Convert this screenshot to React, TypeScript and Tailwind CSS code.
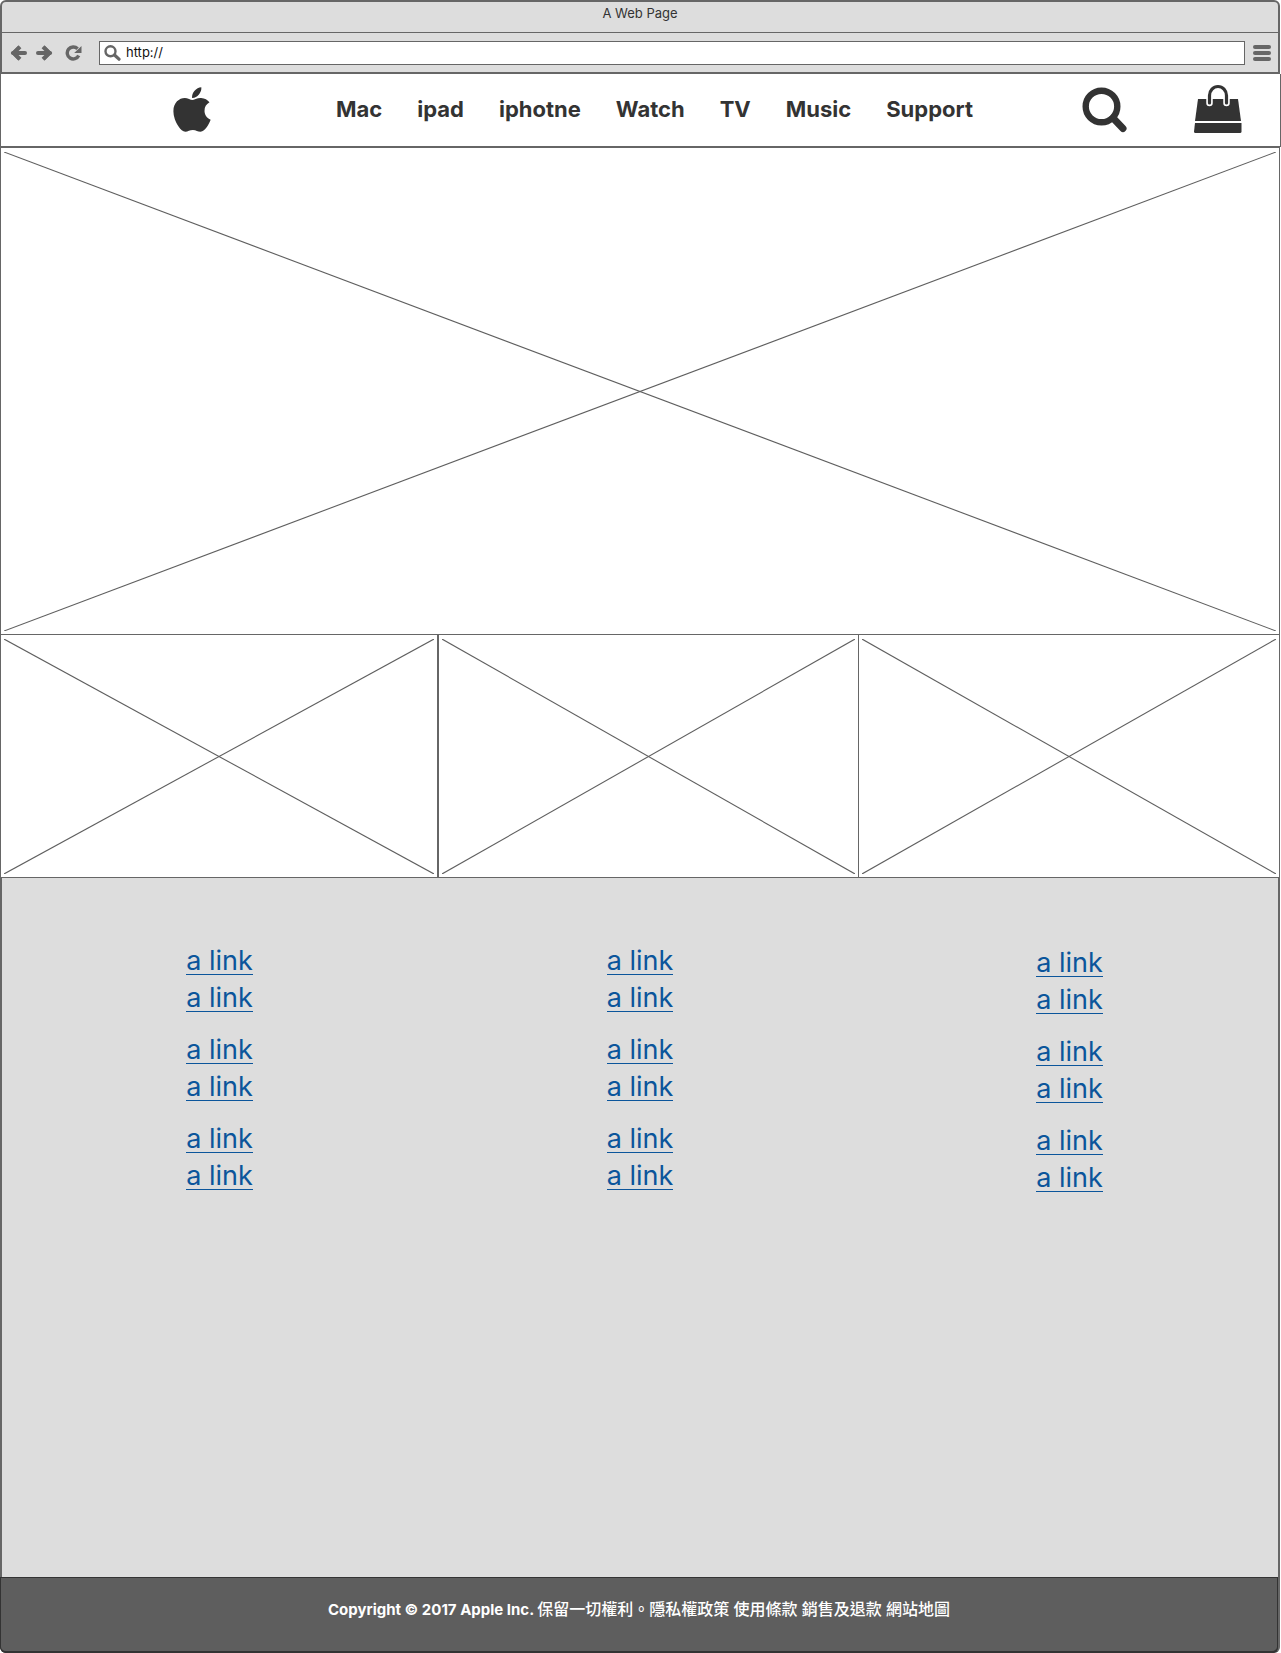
import { FaApple } from "react-icons/fa";

const navItems = ["Mac", "ipad", "iphotne", "Watch", "TV", "Music", "Support"];
const linkGroups = [0, 1, 2];

function Placeholder({ className, label }: { className: string; label: string }) {
  return (
    <div role="img" aria-label={label} className={`border-[#666] bg-white px-[3px] pt-1 pb-[3px] ${className}`}>
      <svg className="block h-full w-full" stroke="#5f5f5f" strokeWidth="1.1">
        <line x1="0" y1="0" x2="100%" y2="100%" />
        <line x1="0" y1="100%" x2="100%" y2="0" />
      </svg>
    </div>
  );
}

function LinkColumn({ className }: { className: string }) {
  return (
    <div className={`flex flex-col items-center gap-[25px] ${className}`}>
      {linkGroups.map((group) => (
        <div key={group} className="flex flex-col gap-2.5">
          <a href="#" className="border-b border-[#0b559b]">a link</a>
          <a href="#" className="border-b border-[#0b559b]">a link</a>
        </div>
      ))}
    </div>
  );
}

function BrowserBar() {
  return (
    <header className="mr-px rounded-t-md border-2 border-[#666] bg-[#ddd]">
      <h1 className="h-[31px] border-b border-[#666] text-center text-[13px] leading-[23px] text-[#333]">
        A Web Page
      </h1>
      <div className="flex h-[39px] items-center pr-[7px] pl-2 text-[#666]">
        <button type="button" aria-label="Back">
          <svg width="18" height="16" viewBox="0 0 18 16" fill="none" stroke="currentColor" strokeWidth="4">
            <path d="M3 8H15" strokeLinecap="round" />
            <path d="M10 1.8L3.6 8L10 14.2" />
            <path d="M1 8L8 1V15Z" fill="currentColor" stroke="none" />
          </svg>
        </button>
        <button type="button" aria-label="Forward" className="ml-[7px]">
          <svg width="18" height="16" viewBox="0 0 18 16" fill="none" stroke="currentColor" strokeWidth="4">
            <path d="M3 8H15" strokeLinecap="round" />
            <path d="M8 1.8L14.4 8L8 14.2" />
            <path d="M17 8L10 1V15Z" fill="currentColor" stroke="none" />
          </svg>
        </button>
        <button type="button" aria-label="Reload" className="ml-3">
          <svg width="17" height="16" viewBox="0 0 17 16" fill="none">
            <path d="M12.6 3.8A6 6 0 1 0 13.7 10.5" stroke="currentColor" strokeWidth="3.4" />
            <path d="M16.5 1V8H9.2Z" fill="currentColor" />
          </svg>
        </button>
        <label className="ml-[17px] flex h-6 flex-1 items-center border border-[#666] bg-white pl-1">
          <svg width="17" height="16" viewBox="0 0 17 16" fill="none" stroke="currentColor" aria-hidden="true">
            <circle cx="6.5" cy="6.3" r="5" strokeWidth="2.4" />
            <path d="M10.5 10L15 14.2" strokeWidth="3.2" strokeLinecap="round" />
          </svg>
          <input
            type="text"
            aria-label="Address"
            defaultValue="http://"
            className="ml-[5px] min-w-0 flex-1 text-[13px] text-[#111] outline-none"
          />
        </label>
        <button type="button" aria-label="Menu" className="ml-2 flex w-[18px] flex-col gap-0.5">
          <span className="h-1 rounded-full bg-[#666]" />
          <span className="h-1 rounded-full bg-[#666]" />
          <span className="h-1 rounded-full bg-[#666]" />
        </button>
      </div>
    </header>
  );
}

export default function App() {
  return (
    <div className="flex min-h-screen flex-col bg-white font-['Inter','Noto_Sans_CJK_TC',sans-serif]">
      <BrowserBar />
      <div className="flex h-[73px] items-center border-x border-b border-[#666] bg-white pr-[38px] pb-0.5 pl-[172px] text-[#333]">
        <a href="#" aria-label="Apple">
          <FaApple className="h-[51px] w-[38px]" />
        </a>
        <nav className="flex flex-1 justify-center gap-[35px] pl-4 text-[22px] leading-8 font-bold">
          {navItems.map((item) => (
            <a key={item} href="#">{item}</a>
          ))}
        </nav>
        <button type="button" aria-label="Search">
          <svg width="46" height="48" viewBox="0 0 46 48" fill="none" stroke="currentColor">
            <circle cx="19.5" cy="21.5" r="15.8" strokeWidth="6.4" />
            <path d="M31 33L41 43.5" strokeWidth="7" strokeLinecap="round" />
          </svg>
        </button>
        <button type="button" aria-label="Shopping bag" className="ml-[66px]">
          <svg width="48" height="50" viewBox="0 -1 48 50">
            <path d="M4 14H44L47 36H1Z" fill="currentColor" />
            <path d="M1 38H47.5V46.5Q47.5 48 46 48H1.5Q0 48 0 46.5Z" fill="currentColor" />
            <path d="M15.5 18V10.5A8.5 9 0 0 1 32.5 10.5V18" fill="none" stroke="#fff" strokeWidth="6.5" strokeLinecap="round" />
            <path d="M15.5 18V10.5A8.5 9 0 0 1 32.5 10.5V18" fill="none" stroke="currentColor" strokeWidth="3.2" strokeLinecap="round" />
          </svg>
        </button>
      </div>
      <Placeholder label="Featured image" className="mr-px h-[488px] border" />
      <div className="mr-px grid h-[243px] grid-cols-[438fr_421fr_421fr]">
        <Placeholder label="First image" className="border-x border-b" />
        <Placeholder label="Second image" className="border-x border-b" />
        <Placeholder label="Third image" className="border-r border-b" />
      </div>
      <main className="mr-px grid flex-1 grid-cols-[435fr_406fr_435fr] border-x-2 border-[#666] bg-[#ddd] text-[27px] leading-[26px] text-[#0b559b]">
        <LinkColumn className="pt-[70px]" />
        <LinkColumn className="pt-[70px]" />
        <LinkColumn className="pt-[72px] pl-[18px]" />
      </main>
      <footer className="mr-px rounded-b-md border-r-2 border-[#666] bg-[#333]">
        <p className="h-[76px] rounded-b-md border border-b-2 border-[#333] bg-[#5e5e5e] pt-5 text-center text-[15px] leading-[22px] font-bold text-white">
          Copyright © 2017 Apple Inc.{" "}
          <span lang="zh-Hant" className="text-base leading-[22px] font-medium">
            保留一切權利。隱私權政策 使用條款 銷售及退款 網站地圖
          </span>
        </p>
      </footer>
    </div>
  );
}
